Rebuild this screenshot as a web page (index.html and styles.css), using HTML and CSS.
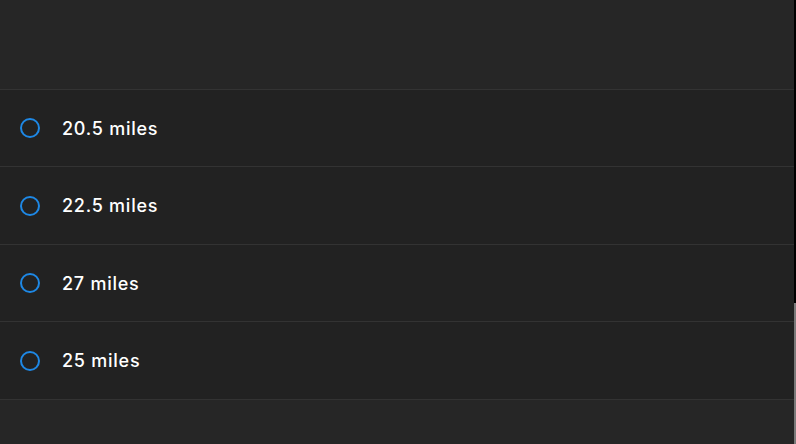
FILE: index.html
```html
<!DOCTYPE html>
<html>
<head>
<meta charset="utf-8">
<link rel="stylesheet" href="styles.css">
</head>
<body>
<div class="page">
  <div class="header"></div>
  <ul class="options">
    <li class="option"><span class="radio"></span><span class="label">20.5 miles</span></li>
    <li class="option"><span class="radio"></span><span class="label">22.5 miles</span></li>
    <li class="option"><span class="radio"></span><span class="label">27 miles</span></li>
    <li class="option"><span class="radio"></span><span class="label">25 miles</span></li>
  </ul>
  <div class="footer"></div>
</div>
<div class="scrollbar"><div class="thumb"></div></div>
</body>
</html>
```
FILE: styles.css
```css
html, body {
  margin: 0;
  padding: 0;
  background: #262626;
  height: 100%;
  overflow: hidden;
}
.page {
  width: 794px;
  font-family: Inter, "Liberation Sans", sans-serif;
}
.header {
  height: 89px;
  background: #262626;
  border-bottom: 1px solid #333333;
}
.options {
  list-style: none;
  margin: 0;
  padding: 0;
  background: #222222;
}
.option {
  display: flex;
  align-items: center;
  height: 76px;
  border-bottom: 1px solid #333333;
  padding-left: 20px;
}
.option:nth-child(even) {
  height: 77px;
}
.radio {
  width: 16px;
  height: 16px;
  border: 2px solid #1e88e5;
  border-radius: 50%;
  flex: none;
}
.label {
  margin-left: 22px;
  color: #ffffff;
  font-size: 18px;
  font-weight: 500;
  letter-spacing: 0.75px;
}
.footer {
  height: 45px;
  background: #262626;
}
.scrollbar {
  position: fixed;
  top: 0;
  right: 0;
  width: 2px;
  height: 444px;
  background: #000;
}
.thumb {
  position: absolute;
  top: 303px;
  left: 0;
  width: 2px;
  height: 141px;
  background: #7a7a7a;
}
```
